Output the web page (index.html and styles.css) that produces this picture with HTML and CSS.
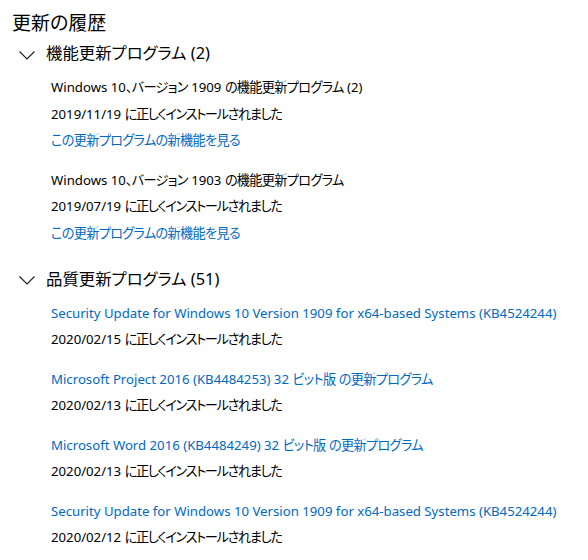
FILE: index.html
```html
<!DOCTYPE html>
<html lang="ja">
<head>
<meta charset="utf-8">
<link rel="stylesheet" href="styles.css">
</head>
<body>
<div class="page">
  <h1 class="title">更新の履歴</h1>

  <section class="group">
    <div class="group-header">
      <svg class="chevron" width="16" height="9" viewBox="0 0 16 9"><path d="M0.5 0.5 L8 8 L15.5 0.5" fill="none" stroke="#1a1a1a" stroke-width="1.1"/></svg>
      <span class="group-title">機能更新プログラム (2)</span>
    </div>
    <ul class="items">
      <li class="item">
        <div class="line">Windows 10<span class="ja">、バージョン</span> 1909 <span class="ja">の機能更新プログラム</span> (2)</div>
        <div class="line date">2019/11/19 <span class="ja">に正しくインストールされました</span></div>
        <div class="line link"><span class="ja">この更新プログラムの新機能を見る</span></div>
      </li>
      <li class="item">
        <div class="line">Windows 10<span class="ja">、バージョン</span> 1903 <span class="ja">の機能更新プログラム</span></div>
        <div class="line date">2019/07/19 <span class="ja">に正しくインストールされました</span></div>
        <div class="line link"><span class="ja">この更新プログラムの新機能を見る</span></div>
      </li>
    </ul>
  </section>

  <section class="group">
    <div class="group-header">
      <svg class="chevron" width="16" height="9" viewBox="0 0 16 9"><path d="M0.5 0.5 L8 8 L15.5 0.5" fill="none" stroke="#1a1a1a" stroke-width="1.1"/></svg>
      <span class="group-title">品質更新プログラム (51)</span>
    </div>
    <ul class="items">
      <li class="item">
        <div class="line link">Security Update for Windows 10 Version 1909 for x64-based Systems (KB4524244)</div>
        <div class="line date">2020/02/15 <span class="ja">に正しくインストールされました</span></div>
      </li>
      <li class="item">
        <div class="line link">Microsoft Project 2016 (KB4484253) 32 <span class="ja">ビット版</span> <span class="ja">の更新プログラム</span></div>
        <div class="line date">2020/02/13 <span class="ja">に正しくインストールされました</span></div>
      </li>
      <li class="item">
        <div class="line link">Microsoft Word 2016 (KB4484249) 32 <span class="ja">ビット版</span> <span class="ja">の更新プログラム</span></div>
        <div class="line date">2020/02/13 <span class="ja">に正しくインストールされました</span></div>
      </li>
      <li class="item">
        <div class="line link">Security Update for Windows 10 Version 1909 for x64-based Systems (KB4524244)</div>
        <div class="line date">2020/02/12 <span class="ja">に正しくインストールされました</span></div>
      </li>
    </ul>
  </section>
</div>
</body>
</html>
```

FILE: styles.css
```css
html, body {
  margin: 0;
  padding: 0;
  background: #ffffff;
}

body {
  font-family: "Noto Sans", "Noto Sans CJK JP", sans-serif;
  font-feature-settings: "palt";
  color: #000000;
  overflow: hidden;
}

.page {
  width: 588px;
  height: 560px;
  padding: 9px 0 0 12px;
  box-sizing: border-box;
}

.title {
  margin: 0;
  font-size: 19px;
  font-weight: 400;
  line-height: 28px;
}

.group {
  margin-bottom: 16.5px;
}

.group-header {
  display: flex;
  align-items: center;
  height: 32px;
  padding-left: 7px;
  gap: 11px;
}

.chevron {
  display: block;
  flex: none;
  margin-top: 4px;
}

.group-title {
  font-size: 16.4px;
  line-height: 32px;
}

.items {
  list-style: none;
  margin: 5px 0 0 0;
  padding: 0 0 0 39px;
  display: flex;
  flex-direction: column;
  gap: 13px;
}

.line {
  font-size: 13.2px;
  line-height: 26.5px;
  white-space: nowrap;
}

.ja {
  letter-spacing: -0.7px;
}

.date .ja {
  letter-spacing: -1.35px;
}

.link {
  color: #0069c2;
}
```
